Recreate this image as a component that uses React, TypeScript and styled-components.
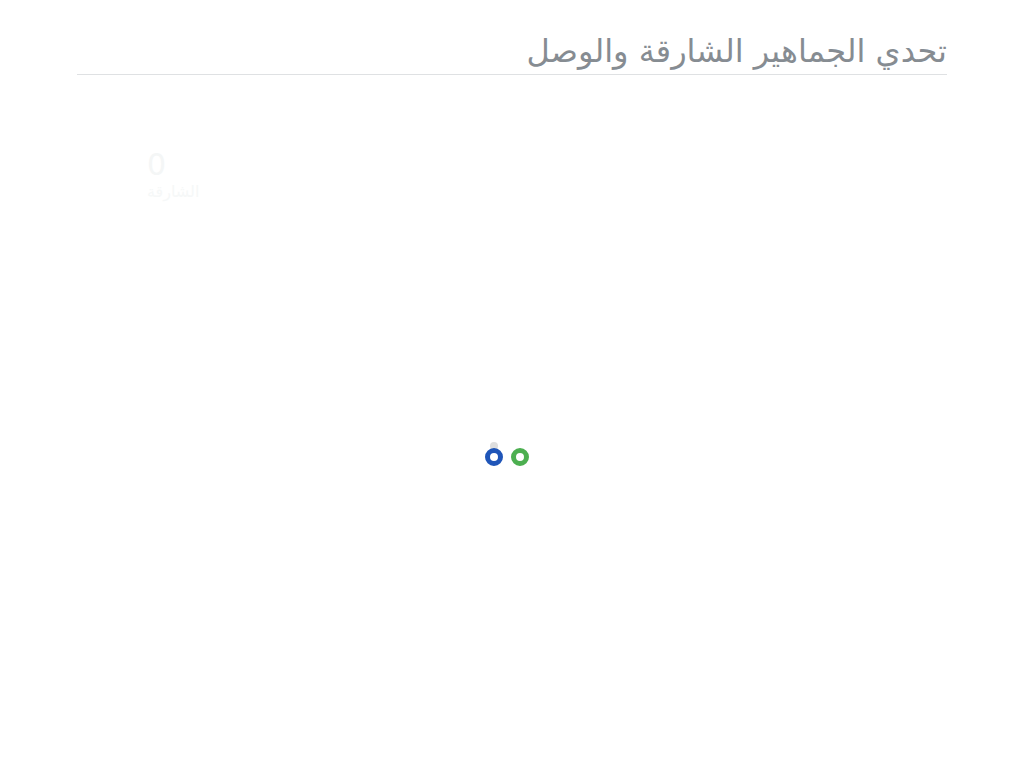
import styled, { createGlobalStyle } from 'styled-components'

const Global = createGlobalStyle`
  html, body { margin: 0; padding: 0; background: #ffffff; }
  body { font-family: "DejaVu Sans", "Noto Sans", sans-serif; }
`

const Page = styled.div`
  position: relative;
  width: 100%;
  min-height: 768px;
  background: #ffffff;
`

const Container = styled.div`
  width: 870px;
  margin: 0 auto;
  padding-top: 30px;
`

const Title = styled.h2`
  margin: 0;
  direction: rtl;
  text-align: right;
  font-family: "DejaVu Sans", sans-serif;
  font-weight: 400;
  font-size: 32px;
  line-height: 42px;
  color: #868c92;
  padding-bottom: 2px;
  border-bottom: 1px solid #dfe1e3;
`

const Scores = styled.div`
  display: flex;
  justify-content: space-between;
  padding: 73px 70px 0 70px;
`

const Team = styled.div`
  display: flex;
  flex-direction: column;
  align-items: flex-start;
`

const Score = styled.span`
  font-family: "DejaVu Sans", sans-serif;
  font-size: 30px;
  line-height: 34px;
  color: #f4f6f6;
`

const TeamName = styled.span`
  font-family: "DejaVu Sans", sans-serif;
  font-size: 16px;
  line-height: 20px;
  color: #f6f8f8;
`

// loading indicator that sits over the page
const Loader = styled.div`
  position: absolute;
  left: 485px;
  top: 448px;
  display: flex;
  align-items: flex-end;
  gap: 8px;
`

const RingSlot = styled.div`
  position: relative;
  z-index: 0;
`

const Ring = styled.div<{ $color: string }>`
  width: 18px;
  height: 18px;
  box-sizing: border-box;
  border-radius: 50%;
  border: 5px solid ${p => p.$color};
`

const Dot = styled.div`
  position: absolute;
  left: 5px;
  top: -6px;
  width: 8px;
  height: 8px;
  border-radius: 50%;
  background: #dedede;
  z-index: -1;
`

export default function App() {
  return (
    <>
      <Global />
      <Page>
        <Container>
          <Title>تحدي الجماهير الشارقة والوصل</Title>
          <Scores>
            <Team>
              <Score>0</Score>
              <TeamName>الشارقة</TeamName>
            </Team>
          </Scores>
        </Container>
        <Loader>
          <RingSlot>
            <Dot />
            <Ring $color="#1f55b8" />
          </RingSlot>
          <RingSlot>
            <Ring $color="#4caf50" />
          </RingSlot>
        </Loader>
      </Page>
    </>
  )
}
